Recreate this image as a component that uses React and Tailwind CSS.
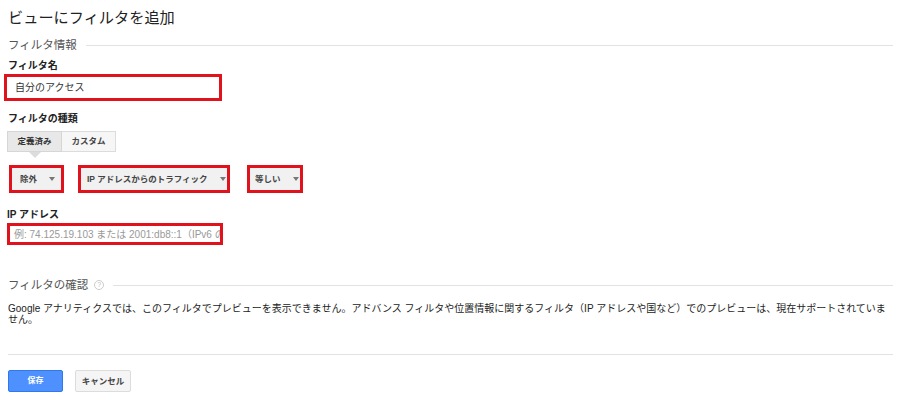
import React from "react";

const font = { fontFamily: '"Liberation Sans", "Noto Sans CJK JP", sans-serif' };

const Caret = () => (
   <span className="ml-[12px] inline-block w-0 h-0 border-l-[3px] border-r-[3px] border-t-[4px] border-l-transparent border-r-transparent border-t-[#777]"></span>
);

const Dropdown = ({ label, pad }) => (
   <div className="border-[3px] border-[#e0121c] h-[28px] flex">
      <div className={"flex items-center bg-[#f1f1f1] text-[8.5px] font-bold text-[#444] w-full " + pad}>
         <span>{label}</span>
         <Caret />
      </div>
   </div>
);

const SectionHead = ({ title, help }) => (
   <div className="flex items-center">
      <span className="text-[11.5px] text-[#555] leading-[14px]">{title}</span>
      {help && (
         <span className="ml-[6px] w-[10px] h-[10px] rounded-full border border-[#ccc] text-[#bbb] text-[7px] leading-[8px] flex items-center justify-center">?</span>
      )}
      <div className="flex-1 h-px bg-[#e2e2e2] ml-[9px] mr-[5px]"></div>
   </div>
);

export default function App() {
   return (
      <div className="w-[906px] h-[400px] bg-white px-2 text-[#222] overflow-hidden" style={font}>
         <h1 className="text-[15.2px] leading-[20px] pt-[8px] text-[#222]">ビューにフィルタを追加</h1>

         <div className="mt-[10px]">
            <SectionHead title="フィルタ情報" />
         </div>

         <div className="mt-[8px] text-[10px] font-bold leading-[12px]">フィルタ名</div>
         <div className="mt-[2px] ml-[-4px] w-[218px] h-[27px] border-[3px] border-[#e0121c] bg-white flex items-center pl-[8px] text-[10px] text-[#333]">
            自分のアクセス
         </div>

         <div className="mt-[12px] text-[10px] font-bold leading-[12px]">フィルタの種類</div>

         <div className="mt-[6px] ml-[-1px] flex">
            <div className="relative w-[55px] h-[21px] bg-[#e8e8e8] border border-[#d6d6d6] flex items-center justify-center text-[8.5px] font-bold text-[#333]">
               定義済み
               <span className="absolute left-[21px] top-[20px] w-0 h-0 border-l-[6px] border-r-[6px] border-t-[6px] border-l-transparent border-r-transparent border-t-[#dcdcdc]"></span>
            </div>
            <div className="w-[54px] h-[21px] bg-[#f6f6f6] border border-l-0 border-[#dcdcdc] flex items-center justify-center text-[8.5px] font-bold text-[#444]">
               カスタム
            </div>
         </div>

         <div className="mt-[13px] flex">
            <div className="ml-[1px] w-[55px]">
               <Dropdown label="除外" pad="pl-[8px]" />
            </div>
            <div className="ml-[14px] w-[152px]">
               <Dropdown label="IP アドレスからのトラフィック" pad="pl-[6px]" />
            </div>
            <div className="ml-[17px] w-[56px]">
               <Dropdown label="等しい" pad="pl-[5px]" />
            </div>
         </div>

         <div className="mt-[16px] text-[10px] font-bold leading-[12px] ml-[-1px]">IP アドレス</div>
         <div className="mt-[2px] ml-[-1px] w-[216px] h-[22px] border-[3px] border-[#e0121c] bg-white flex items-center pl-[4px] text-[10px] text-[#999] overflow-hidden whitespace-nowrap">
            例: 74.125.19.103 または 2001:db8::1（IPv6 の
         </div>

         <div className="mt-[33px]">
            <SectionHead title="フィルタの確認" help />
         </div>

         <p className="mt-[11px] w-[882px] text-[10px] leading-[11px] text-[#222]">
            Google アナリティクスでは、このフィルタでプレビューを表示できません。アドバンス フィルタや位置情報に関するフィルタ（IP アドレスや国など）でのプレビューは、現在サポートされていません。
         </p>

         <div className="mt-[29px] h-px bg-[#e2e2e2] mr-[5px]"></div>

         <div className="mt-[15px] flex">
            <button className="w-[55px] h-[22px] bg-[#4d90fe] border border-[#3079ed] rounded-[2px] text-white text-[8px] font-bold">保存</button>
            <button className="ml-[12px] w-[56px] h-[22px] bg-[#f5f5f5] border border-[#dcdcdc] rounded-[2px] text-[#444] text-[8.5px] font-bold">キャンセル</button>
         </div>
      </div>
   );
}
